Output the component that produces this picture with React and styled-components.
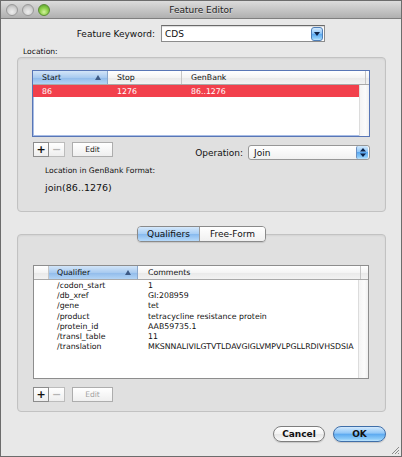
import React from 'react';
import styled, { createGlobalStyle, css } from 'styled-components';

const GlobalStyle = createGlobalStyle`
  html, body {
    margin: 0;
    padding: 0;
    background: #e8e8e8;
  }
  body {
    font-family: "Lucida Grande", "DejaVu Sans", sans-serif;
    color: #111;
  }
  * {
    box-sizing: border-box;
  }
`;

const aquaBlue = css`
  background: linear-gradient(#d2e9fd 0%, #8fc6f7 45%, #5aa8f0 50%, #8ccbf8 85%, #bfe4fd 100%);
`;

const Window = styled.div`
  position: relative;
  width: 402px;
  height: 457px;
  border: 1px solid #6c6c6c;
  background: #e8e8e8;
  display: flex;
  flex-direction: column;
  overflow: hidden;
`;

const TitleBar = styled.div`
  height: 18px;
  display: grid;
  grid-template-columns: 1fr auto 1fr;
  align-items: center;
  background: linear-gradient(#dcdcdc, #b0b0b0);
  border-bottom: 1px solid #7f7f7f;
`;

const Lights = styled.div`
  display: flex;
  gap: 4px;
  padding-left: 5px;
`;

const Light = styled.span`
  width: 12px;
  height: 12px;
  border-radius: 50%;
  border: 1px solid ${(p) => (p.$green ? '#5b8a36' : '#999999')};
  background: ${(p) =>
    p.$green
      ? 'radial-gradient(circle at 50% 70%, #d4f3a0 0%, #8fd14c 45%, #4e9a24 100%)'
      : 'radial-gradient(circle at 50% 70%, #eeeeee 0%, #d3d3d3 50%, #a9a9a9 100%)'};
`;

const Title = styled.div`
  font-size: 9px;
  color: #222;
  text-shadow: 0 1px 0 rgba(255, 255, 255, 0.5);
`;

const Body = styled.div`
  flex: 1;
  display: flex;
  flex-direction: column;
  padding: 0 15px 0 16px;
`;

const KeywordRow = styled.div`
  margin-top: 6px;
  height: 17px;
  display: flex;
  align-items: center;
  gap: 6px;
`;

const FieldLabel = styled.label`
  width: ${(p) => p.$width || 'auto'};
  text-align: right;
  font-size: 9px;
`;

const Combo = styled.div`
  width: 164px;
  height: 17px;
  display: flex;
  align-items: center;
  justify-content: space-between;
  background: #fff;
  border: 1px solid #8c8c8c;
  border-top-color: #6a6a6a;
  box-shadow: inset 0 1px 1px rgba(0, 0, 0, 0.15);
  padding: 0 1px 0 3px;
  font-size: 9px;
`;

const ArrowButton = styled.span`
  width: 12px;
  height: 14px;
  border-radius: 3px;
  border: 1px solid #4f7fb8;
  ${aquaBlue};
  display: flex;
  align-items: center;
  justify-content: center;
`;

const SmallLabel = styled.div`
  font-size: 7.6px;
  line-height: 10px;
  margin: ${(p) => p.$margin || '0'};
`;

const GroupBox = styled.div`
  height: ${(p) => p.$height}px;
  margin-top: ${(p) => p.$top || 0}px;
  border: 1px solid #c2c2c2;
  border-radius: 4px;
  background: #e0e0e0;
  box-shadow: inset 0 1px 2px rgba(0, 0, 0, 0.06);
  display: flex;
  flex-direction: column;
  padding: ${(p) => p.$padding};
`;

const TableFrame = styled.div`
  height: ${(p) => p.$height}px;
  margin-left: ${(p) => p.$left || 0}px;
  background: #fff;
  border: 1px solid ${(p) => (p.$focused ? '#5876b6' : '#8d8d8d')};
  box-shadow: ${(p) => (p.$focused ? 'inset 0 0 0 1px #a8bde6' : 'none')};
  display: flex;
  flex-direction: column;
  overflow: hidden;
`;

const HeaderRow = styled.div`
  height: 14px;
  display: grid;
  grid-template-columns: ${(p) => p.$cols};
  border-bottom: 1px solid #a9a9a9;
  background: linear-gradient(#ffffff 0%, #f4f4f4 50%, #e9e9e9 51%, #f2f2f2 100%);
`;

const HeaderCell = styled.div`
  display: flex;
  align-items: center;
  justify-content: space-between;
  padding: 0 6px 0 ${(p) => p.$pad || 8}px;
  font-size: 7.8px;
  border-right: 1px solid #c6c6c6;
  ${(p) =>
    p.$selected &&
    css`
      background: linear-gradient(#d3e5f8 0%, #a9cbf0 50%, #8fbaea 51%, #b3d4f5 100%);
      border-right-color: #8aa7cc;
    `}
`;

const TableBody = styled.div`
  flex: 1;
  display: grid;
  grid-template-columns: 1fr 10px;
  min-height: 0;
`;

const Rows = styled.div`
  display: flex;
  flex-direction: column;
  overflow: hidden;
`;

const Row = styled.div`
  height: ${(p) => p.$height}px;
  display: grid;
  grid-template-columns: ${(p) => p.$cols};
  align-items: center;
  font-size: 7.8px;
  white-space: nowrap;
  ${(p) =>
    p.$selected &&
    css`
      background: #f2404c;
      color: #fff;
    `}
`;

const Cell = styled.div`
  overflow: hidden;
  padding-left: ${(p) => p.$pad || 8}px;
`;

const ScrollStrip = styled.div`
  border-left: 1px solid #dcdcdc;
  background: linear-gradient(90deg, #f4f4f4, #fbfbfb 60%, #efefef);
`;

const ControlRow = styled.div`
  margin-top: ${(p) => p.$top}px;
  display: flex;
  align-items: flex-start;
  padding-left: 1px;
`;

const PlusMinus = styled.div`
  display: flex;
`;

const SquareButton = styled.span`
  width: 16px;
  height: 15px;
  display: flex;
  align-items: center;
  justify-content: center;
  border: 1px solid ${(p) => (p.$disabled ? '#bcbcbc' : '#8c8c8c')};
  background: linear-gradient(#ffffff, #eeeeee);
  color: ${(p) => (p.$disabled ? '#b4b4b4' : '#111')};
  font-size: 11px;
  font-weight: bold;
  line-height: 1;
  & + & {
    border-left: none;
  }
`;

const EditButton = styled.span`
  margin-left: 7px;
  width: 41px;
  height: 15px;
  display: flex;
  align-items: center;
  justify-content: center;
  border: 1px solid #adadad;
  background: linear-gradient(#ffffff, #efefef);
  font-size: 7.6px;
  color: ${(p) => (p.$disabled ? '#a2a2a2' : '#222')};
`;

const OperationGroup = styled.div`
  margin-left: auto;
  margin-top: 3px;
  display: flex;
  align-items: center;
  gap: 5px;
`;

const Popup = styled.div`
  width: 122px;
  height: 15px;
  display: flex;
  align-items: center;
  justify-content: space-between;
  border: 1px solid #979797;
  border-radius: 3px;
  background: linear-gradient(#ffffff, #f1f1f1);
  padding: 0 1px 0 5px;
  font-size: 9px;
`;

const Stepper = styled.span`
  width: 12px;
  height: 13px;
  border-radius: 2px;
  border-left: 1px solid #6a8fc0;
  ${aquaBlue};
  display: flex;
  align-items: center;
  justify-content: center;
`;

const GenBankText = styled.div`
  margin: 6px 0 0 13px;
  font-size: 9.5px;
  line-height: 12px;
`;

const Segmented = styled.div`
  position: relative;
  z-index: 1;
  align-self: center;
  margin-top: ${(p) => p.$top}px;
  display: flex;
  height: 16px;
  border: 1px solid #8a8a8a;
  border-radius: 4px;
  overflow: hidden;
  box-shadow: 0 1px 1px rgba(0, 0, 0, 0.12);
`;

const Segment = styled.span`
  width: ${(p) => p.$width}px;
  display: flex;
  align-items: center;
  justify-content: center;
  font-size: 9px;
  background: linear-gradient(#ffffff, #f0f0f0);
  & + & {
    border-left: 1px solid #9a9a9a;
  }
  ${(p) =>
    p.$selected &&
    css`
      background: linear-gradient(#d5e8fb 0%, #a6cdf4 50%, #86b9ee 51%, #b7dafa 100%);
    `}
`;

const Footer = styled.div`
  margin-top: 14px;
  display: flex;
  justify-content: flex-end;
  gap: 8px;
`;

const PillButton = styled.span`
  width: ${(p) => p.$width}px;
  height: 16px;
  border-radius: 8px;
  display: flex;
  align-items: center;
  justify-content: center;
  font-size: 9px;
  font-weight: bold;
  border: 1px solid ${(p) => (p.$primary ? '#3f6ea8' : '#7e7e7e')};
  background: linear-gradient(#ffffff, #f3f3f3 50%, #e6e6e6 51%, #fafafa);
  box-shadow: 0 1px 1px rgba(0, 0, 0, 0.15);
  ${(p) => p.$primary && aquaBlue};
`;

const Grip = styled.svg`
  position: absolute;
  right: 1px;
  bottom: 1px;
`;

const SortArrow = () => (
  <svg width="6" height="5" viewBox="0 0 6 5">
    <path d="M3 0 L6 5 L0 5 Z" fill="#3d5a85" />
  </svg>
);

const DownArrow = () => (
  <svg width="6" height="4" viewBox="0 0 6 4">
    <path d="M0 0 L6 0 L3 4 Z" fill="#0d2348" />
  </svg>
);

const UpDownArrows = () => (
  <svg width="6" height="9" viewBox="0 0 6 9">
    <path d="M3 0 L6 3.5 L0 3.5 Z M0 5.5 L6 5.5 L3 9 Z" fill="#0d2348" />
  </svg>
);

const locationCols = '75px 74px 1fr';
const qualifierCols = '15px 89px 1fr';

// the translation column only shows what fits before the scroller
const qualifiers = [
  ['/codon_start', '1'],
  ['/db_xref', 'GI:208959'],
  ['/gene', 'tet'],
  ['/product', 'tetracycline resistance protein'],
  ['/protein_id', 'AAB59735.1'],
  ['/transl_table', '11'],
  ['/translation', 'MKSNNALIVILGTVTLDAVGIGLVMPVLPGLLRDIVHSDSIA'],
];

function LocationTable() {
  return (
    <TableFrame $height={67} $focused>
      <HeaderRow $cols={`${locationCols} 3px`}>
        <HeaderCell $selected $pad={9}>
          Start
          <SortArrow />
        </HeaderCell>
        <HeaderCell $pad={9}>Stop</HeaderCell>
        <HeaderCell $pad={9}>GenBank</HeaderCell>
        <HeaderCell />
      </HeaderRow>
      <TableBody>
        <Rows>
          <Row $height={12} $cols={locationCols} $selected>
            <Cell $pad={9}>86</Cell>
            <Cell $pad={9}>1276</Cell>
            <Cell $pad={9}>86..1276</Cell>
          </Row>
        </Rows>
        <ScrollStrip />
      </TableBody>
    </TableFrame>
  );
}

function QualifierTable() {
  return (
    <TableFrame $height={114} $left={1}>
      <HeaderRow $cols={`${qualifierCols} 7px`}>
        <HeaderCell />
        <HeaderCell $selected>
          Qualifier
          <SortArrow />
        </HeaderCell>
        <HeaderCell $pad={10}>Comments</HeaderCell>
        <HeaderCell />
      </HeaderRow>
      <TableBody>
        <Rows>
          {qualifiers.map(([name, value]) => (
            <Row key={name} $height={10.3} $cols={qualifierCols}>
              <Cell />
              <Cell>{name}</Cell>
              <Cell $pad={10}>{value}</Cell>
            </Row>
          ))}
        </Rows>
        <ScrollStrip />
      </TableBody>
    </TableFrame>
  );
}

export default function App() {
  return (
    <>
      <GlobalStyle />
      <Window>
        <TitleBar>
          <Lights>
            <Light />
            <Light />
            <Light $green />
          </Lights>
          <Title>Feature Editor</Title>
          <span />
        </TitleBar>

        <Body>
          <KeywordRow>
            <FieldLabel $width="138px">Feature Keyword:</FieldLabel>
            <Combo>
              CDS
              <ArrowButton>
                <DownArrow />
              </ArrowButton>
            </Combo>
          </KeywordRow>

          <SmallLabel $margin="5px 0 0 6px">Location:</SmallLabel>

          <GroupBox $height={155} $padding="12px 15px 0 14px">
            <LocationTable />
            <ControlRow $top={5}>
              <PlusMinus>
                <SquareButton>+</SquareButton>
                <SquareButton $disabled>−</SquareButton>
              </PlusMinus>
              <EditButton>Edit</EditButton>
              <OperationGroup>
                <FieldLabel>Operation:</FieldLabel>
                <Popup>
                  Join
                  <Stepper>
                    <UpDownArrows />
                  </Stepper>
                </Popup>
              </OperationGroup>
            </ControlRow>
            <SmallLabel $margin="6px 0 0 13px">Location in GenBank Format:</SmallLabel>
            <GenBankText>join(86..1276)</GenBankText>
          </GroupBox>

          <Segmented $top={14}>
            <Segment $width={61} $selected>
              Qualifiers
            </Segment>
            <Segment $width={66}>Free-Form</Segment>
          </Segmented>

          <GroupBox $height={178} $top={-8} $padding="30px 16px 0 14px">
            <QualifierTable />
            <ControlRow $top={8}>
              <PlusMinus>
                <SquareButton>+</SquareButton>
                <SquareButton $disabled>−</SquareButton>
              </PlusMinus>
              <EditButton $disabled>Edit</EditButton>
            </ControlRow>
          </GroupBox>

          <Footer>
            <PillButton $width={52}>Cancel</PillButton>
            <PillButton $width={53} $primary>
              OK
            </PillButton>
          </Footer>
        </Body>

        <Grip width="10" height="10" viewBox="0 0 10 10">
          <path d="M9 2 L2 9 M9 5 L5 9 M9 8 L8 9" stroke="#8a8a8a" strokeWidth="1" />
        </Grip>
      </Window>
    </>
  );
}
